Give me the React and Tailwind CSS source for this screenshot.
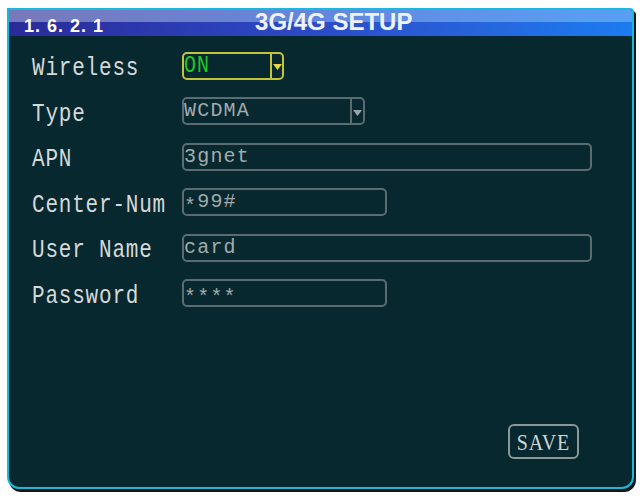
const rows = [
    { label: "Wireless", value: "ON", kind: "active-select", width: "w-[102px]" },
    { label: "Type", value: "WCDMA", kind: "select", width: "w-[183px]" },
    { label: "APN", value: "3gnet", kind: "text", width: "w-[410px]" },
    { label: "Center-Num", value: "*99#", kind: "text", width: "w-[205px]" },
    { label: "User Name", value: "card", kind: "text", width: "w-[410px]" },
    { label: "Password", value: "****", kind: "text", width: "w-[205px]" },
];

function Arrow({ color }) {
    return (
        <svg width="9" height="6" viewBox="0 0 9 6">
            <polygon points="0,0 9,0 4.5,6" fill={color} />
        </svg>
    );
}

// asterisks sit mid-height in the device font
function Value({ text }) {
    return (
        <>
            {text.split("").map((ch, i) =>
                ch === "*" ? (
                    <span key={i} className="inline-block translate-y-[5px]">*</span>
                ) : (
                    <span key={i}>{ch}</span>
                )
            )}
        </>
    );
}

function Field({ row }) {
    if (row.kind === "active-select") {
        return (
            <div className={`${row.width} h-[28px] border-2 border-[#c4c33c] rounded-[5px] flex items-stretch`}>
                <div className="flex-1 flex items-center text-[20px] leading-none text-[#22c62a] tracking-[1px]">
                    <span className="inline-block scale-y-[1.15]">{row.value}</span>
                </div>
                <div className="w-[2px] bg-[#c4c33c]" />
                <div className="w-[10px] flex items-center justify-center pt-[3px]">
                    <Arrow color="#e8d840" />
                </div>
            </div>
        );
    }
    if (row.kind === "select") {
        return (
            <div className={`${row.width} h-[28px] border-2 border-[#5a6c72] rounded-[5px] flex items-stretch`}>
                <div className="flex-1 flex items-center text-[20px] leading-none text-[#a3abac] tracking-[1.2px]">
                    {row.value}
                </div>
                <div className="w-[2px] bg-[#5a6c72]" />
                <div className="w-[11px] flex items-center justify-center pt-[4px]">
                    <Arrow color="#9aa4a6" />
                </div>
            </div>
        );
    }
    return (
        <div className={`${row.width} h-[28px] border-2 border-[#5a6c72] rounded-[5px] flex items-center text-[20px] leading-none text-[#a3abac] tracking-[1.2px]`}>
            <Value text={row.value} />
        </div>
    );
}

export default function App() {
    return (
        <div className="w-[642px] h-[498px] bg-white pt-[8px] pl-[7px]" style={{ fontFamily: '"Liberation Mono", monospace' }}>
            <div className="w-[627px] h-[481px] border-2 border-[#19b9dd] rounded-tr-[4px] rounded-b-[12px] bg-[#07282f] flex flex-col overflow-hidden shadow-[2px_3px_0_#151515]">
                <div className="h-[26px] shrink-0 bg-gradient-to-r from-[#2a2a98] via-[#2a4cc8] to-[#1c7cf0] relative">
                    <div className="h-[12px] bg-gradient-to-r from-[#9a9ac8]/70 via-[#7aa0e8]/70 to-[#66a8f4]/80" />
                    <div className="absolute inset-0 flex items-end pb-[1px]" style={{ fontFamily: '"Liberation Sans", Arial, sans-serif' }}>
                        <span className="ml-[15px] text-[18px] font-bold text-white leading-none tracking-[1px]">1. 6. 2. 1</span>
                        <span className="ml-[151px] mb-[1px] text-[24px] font-bold text-[#eef2ff] leading-none [text-shadow:0_0_1px_#6080c0]">3G/4G SETUP</span>
                    </div>
                </div>
                <div className="flex-1 flex flex-col pt-[7px] pl-[23px]">
                    {rows.map((row) => (
                        <div key={row.label} className="h-[45.5px] flex items-center">
                            <div className="w-[150px] text-[21px] leading-none text-[#d6d8d8] tracking-[0.8px] whitespace-pre">
                                <span className="inline-block translate-y-[3px] scale-y-[1.25]">{row.label}</span>
                            </div>
                            <Field row={row} />
                        </div>
                    ))}
                    <div className="flex-1" />
                    <div className="flex justify-end pr-[53px] pb-[28px]">
                        <div className="w-[71px] h-[35px] border-2 border-[#8a9898] rounded-[6px] flex items-center justify-center text-[20px] leading-none text-[#d0d4d4] tracking-[1px]" style={{ fontFamily: '"Liberation Serif", serif' }}>
                            <span className="inline-block scale-y-[1.2]">SAVE</span>
                        </div>
                    </div>
                </div>
            </div>
        </div>
    );
}
